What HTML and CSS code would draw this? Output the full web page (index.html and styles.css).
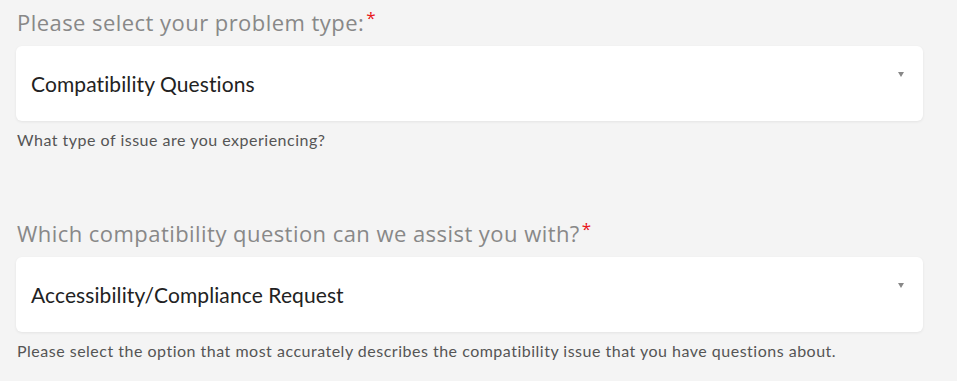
FILE: index.html
```
<!DOCTYPE html>
<html>
<head>
<meta charset="utf-8">
<link rel="stylesheet" href="styles.css">
</head>
<body>
<div class="form">
  <div class="field first">
    <div class="label">Please select your problem type:<span class="req">*</span></div>
    <div class="select">
      <span class="value">Compatibility Questions</span>
      <span class="arrow"></span>
    </div>
    <div class="help">What type of issue are you experiencing?</div>
  </div>
  <div class="field second">
    <div class="label">Which compatibility question can we assist you with?<span class="req">*</span></div>
    <div class="select">
      <span class="value">Accessibility/Compliance Request</span>
      <span class="arrow"></span>
    </div>
    <div class="help">Please select the option that most accurately describes the compatibility issue that you have questions about.</div>
  </div>
</div>
</body>
</html>
```

FILE: styles.css
```
html, body {
  margin: 0;
  padding: 0;
  background: #f4f4f4;
}
.form {
  padding-left: 16px;
  width: 907px;
}
.field.first {
  padding-top: 8px;
}
.field.second {
  margin-top: 69px;
}
.label {
  font-family: "Open Sans", sans-serif;
  font-size: 22px;
  line-height: 28px;
  letter-spacing: 0.45px;
  color: #888888;
  padding-left: 1px;
}
.req {
  color: #e8141b;
  font-size: 17px;
  vertical-align: top;
  line-height: 20px;
  margin-left: 2px;
}
.select {
  margin-top: 10px;
  height: 75px;
  background: #ffffff;
  border-radius: 6px;
  box-shadow: 0 1px 3px rgba(0, 0, 0, 0.07);
  display: flex;
  align-items: center;
  padding: 0 19px 0 15px;
}
.value {
  flex: 1;
  font-family: Lato, sans-serif;
  font-size: 21px;
  letter-spacing: 0.1px;
  color: #222222;
}
.arrow {
  align-self: flex-start;
  margin-top: 26px;
  width: 0;
  height: 0;
  border-left: 3.5px solid transparent;
  border-right: 3.5px solid transparent;
  border-top: 5px solid #888888;
}
.help {
  margin-top: 9px;
  font-family: Lato, sans-serif;
  font-size: 16px;
  line-height: 20px;
  letter-spacing: 0.5px;
  color: #555555;
  padding-left: 1px;
}
```
